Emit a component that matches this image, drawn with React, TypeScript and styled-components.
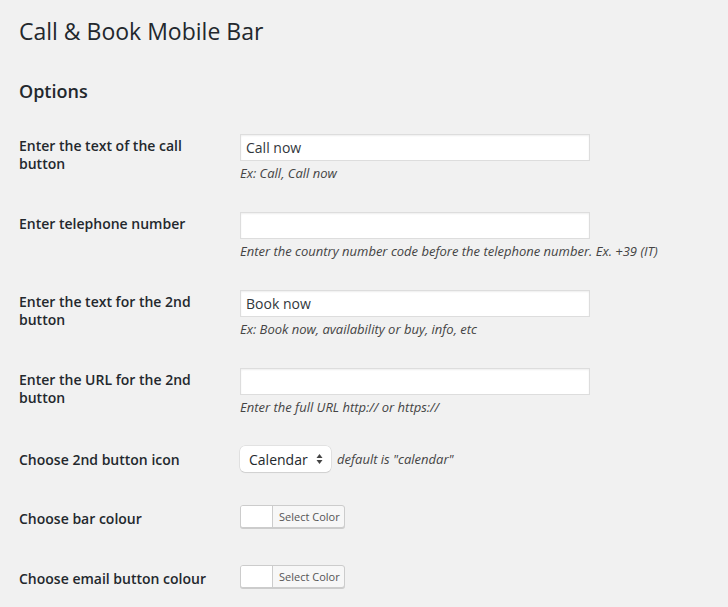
import React from "react";
import styled, { createGlobalStyle } from "styled-components";

const Global = createGlobalStyle`
  html, body { margin: 0; padding: 0; background: #f1f1f1; }
  body { font-family: "Open Sans", "Noto Sans", sans-serif; color: #23282d; font-size: 13px; }
`;

const Wrap = styled.div`
  padding: 8px 20px 0 19px;
`;

const Title = styled.h1`
  margin: 0;
  padding: 9px 0 4px;
  font-size: 23px;
  font-weight: 400;
  line-height: 29px;
  color: #23282d;
`;

const Section = styled.h2`
  margin: 29px 0 0;
  font-size: 18px;
  font-weight: 600;
  line-height: 24px;
  color: #23282d;
`;

const Table = styled.div`
  margin-top: 17px;
  display: flex;
  flex-direction: column;
`;

const Row = styled.div<{ $h: number }>`
  display: grid;
  grid-template-columns: 221px 1fr;
  height: ${(p) => p.$h}px;
`;

const Label = styled.div<{ $pt: number }>`
  padding-top: ${(p) => p.$pt}px;
  padding-right: 10px;
  font-size: 14px;
  font-weight: 600;
  line-height: 18px;
  color: #23282d;
`;

const Field = styled.div<{ $pt: number }>`
  padding-top: ${(p) => p.$pt}px;
`;

const TextInput = styled.div`
  box-sizing: border-box;
  width: 350px;
  height: 27px;
  background: #fff;
  border: 1px solid #ddd;
  box-shadow: inset 0 1px 2px rgba(0, 0, 0, 0.07);
  padding: 0 5px;
  font-size: 14px;
  line-height: 25px;
  color: #32373c;
`;

const Desc = styled.p`
  margin: 3px 0 0;
  font-size: 13px;
  font-style: italic;
  line-height: 18px;
  color: #444;
`;

const Inline = styled.div`
  display: flex;
  align-items: center;
  gap: 6px;
`;

const Select = styled.div`
  box-sizing: border-box;
  width: 91px;
  height: 26px;
  background: #fff;
  border-radius: 5px;
  box-shadow: 0 0 0 0.5px rgba(0, 0, 0, 0.12), 0 1px 1px rgba(0, 0, 0, 0.08);
  display: flex;
  align-items: center;
  justify-content: space-between;
  padding: 0 8px 0 9px;
  font-size: 14px;
  color: #23282d;
`;

const InlineDesc = styled.span`
  font-size: 13px;
  font-style: italic;
  color: #444;
`;

const ColorButton = styled.div`
  box-sizing: border-box;
  display: flex;
  width: 105px;
  height: 23px;
  border: 1px solid #ccc;
  border-radius: 3px;
  box-shadow: 0 1px 0 #ccc;
  background: #f7f7f7;
  overflow: hidden;
`;

const Swatch = styled.div`
  width: 31px;
  background: #fff;
  border-right: 1px solid #ccc;
`;

const ColorText = styled.div`
  flex: 1;
  padding-left: 6px;
  font-size: 11px;
  line-height: 21px;
  color: #555;
`;

const Arrows = () => (
  <svg width="7" height="12" viewBox="0 0 7 12">
    <path d="M3.5 1 L6.5 5 L0.5 5 Z" fill="#444" />
    <path d="M3.5 11 L6.5 7 L0.5 7 Z" fill="#444" />
  </svg>
);

export default function App() {
  return (
    <>
      <Global />
      <Wrap>
        <Title>Call &amp; Book Mobile Bar</Title>
        <Section>Options</Section>
        <Table>
          <Row $h={78}>
            <Label $pt={17}>Enter the text of the call button</Label>
            <Field $pt={14}>
              <TextInput>Call now</TextInput>
              <Desc>Ex: Call, Call now</Desc>
            </Field>
          </Row>
          <Row $h={78}>
            <Label $pt={17}>Enter telephone number</Label>
            <Field $pt={14}>
              <TextInput />
              <Desc>Enter the country number code before the telephone number. Ex. +39 (IT)</Desc>
            </Field>
          </Row>
          <Row $h={78}>
            <Label $pt={17}>Enter the text for the 2nd button</Label>
            <Field $pt={14}>
              <TextInput>Book now</TextInput>
              <Desc>Ex: Book now, availability or buy, info, etc</Desc>
            </Field>
          </Row>
          <Row $h={79}>
            <Label $pt={17}>Enter the URL for the 2nd button</Label>
            <Field $pt={14}>
              <TextInput />
              <Desc>Enter the full URL http:// or https://</Desc>
            </Field>
          </Row>
          <Row $h={59}>
            <Label $pt={18}>Choose 2nd button icon</Label>
            <Field $pt={13}>
              <Inline>
                <Select>
                  <span>Calendar</span>
                  <Arrows />
                </Select>
                <InlineDesc>default is "calendar"</InlineDesc>
              </Inline>
            </Field>
          </Row>
          <Row $h={60}>
            <Label $pt={18}>Choose bar colour</Label>
            <Field $pt={13}>
              <ColorButton>
                <Swatch />
                <ColorText>Select Color</ColorText>
              </ColorButton>
            </Field>
          </Row>
          <Row $h={60}>
            <Label $pt={18}>Choose email button colour</Label>
            <Field $pt={13}>
              <ColorButton>
                <Swatch />
                <ColorText>Select Color</ColorText>
              </ColorButton>
            </Field>
          </Row>
        </Table>
      </Wrap>
    </>
  );
}
